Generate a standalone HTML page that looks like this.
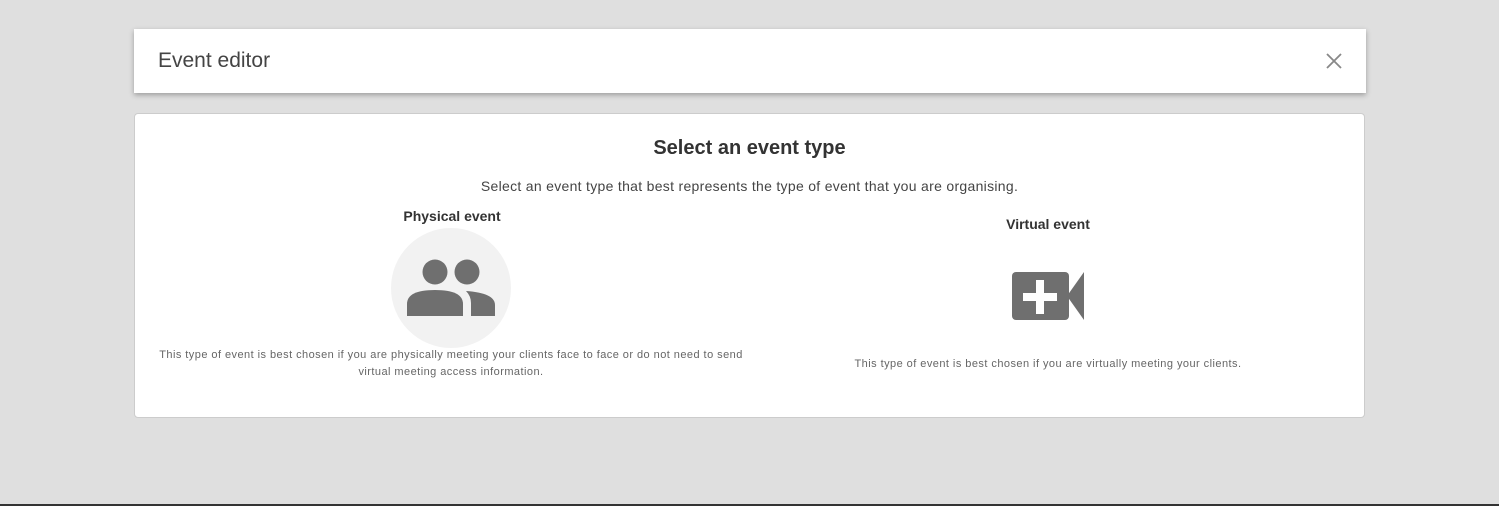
<!DOCTYPE html><html><head><style>
body{margin:0;width:1499px;height:506px;background:#dfdfdf;font-family:"Liberation Sans",sans-serif;position:relative;overflow:hidden}
.hdr{position:absolute;left:134px;top:29px;width:1232px;height:64px;background:#fff;box-shadow:0 2px 5px rgba(0,0,0,.3)}
.hdr span{position:absolute;left:24px;top:20px;font-size:21px;color:#444;font-weight:300}
.card{position:absolute;left:134px;top:113px;width:1229px;height:303px;background:#fff;border:1px solid #ccc;border-radius:4px}
.t{position:absolute;width:100%;text-align:center}
.s{font-size:11px;color:#666;line-height:17px;letter-spacing:0.45px}
</style></head><body>
<div class="hdr"><span>Event editor</span>
<svg style="position:absolute;left:1192px;top:24px" width="16" height="16"><path d="M1 1L15 15M15 1L1 15" stroke="#888" stroke-width="1.8"/></svg></div>
<div class="card">
<div class="t" style="top:23px;font-size:20px;font-weight:bold;color:#333">Select an event type</div>
<div class="t" style="top:64px;font-size:14px;color:#444;letter-spacing:0.3px">Select an event type that best represents the type of event that you are organising.</div>
<div style="position:absolute;left:17px;width:600px;top:94px;text-align:center;font-size:14px;font-weight:bold;color:#333">Physical event</div>
<div style="position:absolute;left:0;width:632px;top:233px;text-align:center" class="s">This type of event is best chosen if you are physically meeting your clients face to face or do not need to send<br>virtual meeting access information.</div>
<div style="position:absolute;left:613px;width:600px;top:102px;text-align:center;font-size:14px;font-weight:bold;color:#333">Virtual event</div>
<div style="position:absolute;left:613px;width:600px;top:242px;text-align:center" class="s">This type of event is best chosen if you are virtually meeting your clients.</div>
</div>
<svg style="position:absolute;left:0;top:0" width="1499" height="506">
<circle cx="451" cy="288" r="60" fill="#f2f2f2"/>
<g fill="#6f6f6f">
<circle cx="435" cy="272" r="12.5"/><circle cx="467" cy="272" r="12.5"/>
<path d="M407 316V304Q407 290 435 290Q463 290 463 304V316Z"/>
<path d="M466 291Q495 293 495 305V316H471V303Q471 296 466 291Z"/>
<rect x="1012" y="272" width="57" height="48" rx="4"/>
<path d="M1067 296L1084 272V320Z"/>
</g>
<path d="M1040 280V314M1023 297H1057" stroke="#fff" stroke-width="8"/>
<rect x="0" y="504" width="1499" height="2" fill="#333"/>
</svg>
</body></html>
